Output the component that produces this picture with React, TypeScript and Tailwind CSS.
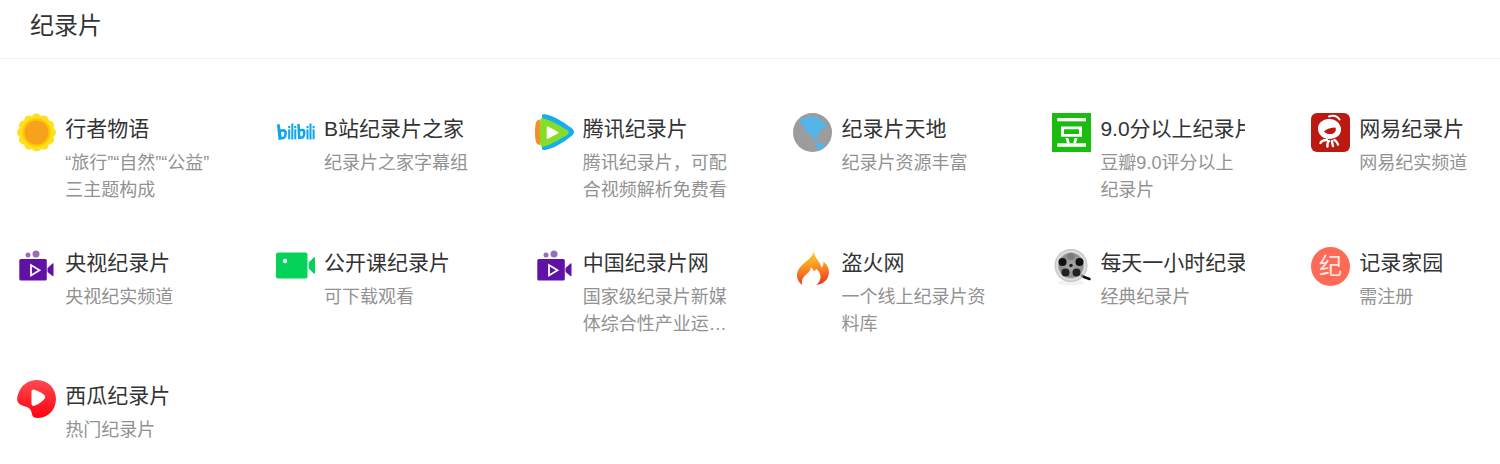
const Sunflower = () => (
  <svg viewBox="0 0 39 39" className="size-full">
    {Array.from({ length: 12 }).map((_, i) => {
      const a = (i * Math.PI) / 6
      return <circle key={i} cx={19.5 + 14.5 * Math.cos(a)} cy={19.5 + 14 * Math.sin(a)} r="5" fill="#ffdf1e" />
    })}
    <circle cx="19.5" cy="19.5" r="14" fill="#ffc800" />
    <circle cx="19.5" cy="19.5" r="12" fill="#f7a11c" />
  </svg>
)

const Bilibili = () => (
  <svg viewBox="0 0 39 39" className="size-full" fill="#0ea5ec">
    <path d="M1 11.500l2.600-.5 1 5.500c2.900-1 5.900-.7 6.200 2.300.3 3.300-.6 6.800-3.300 7.400L2.500 27zM5 19.200l.7 4.800 1.900-.4c.8-1.600.9-3.600.4-4.400-.7-.6-2-.4-3 0z" />
    <rect x="12.200" y="13" width="2" height="2.200" />
    <rect x="12.200" y="16.300" width="2" height="10" />
    <rect x="15.300" y="10.500" width="2" height="16" />
    <rect x="18.300" y="13" width="2" height="2.200" />
    <rect x="18.300" y="16.300" width="2" height="10" />
    <path d="M21.200 11l2.400-.3.500 5.300c2.700-.7 5.300-.5 5.400 2.500.1 3.200-.7 6.800-3.200 7.300l-4.300.5zM24.200 18.500l.3 5 1.700-.2c.8-1.500 1-3.600.6-4.500-.6-.7-1.700-.6-2.600-.3z" />
    <rect x="30.500" y="13" width="2" height="2.200" />
    <rect x="30.500" y="16.300" width="2" height="10" />
    <rect x="33.500" y="10.500" width="2" height="16" />
    <rect x="36.600" y="13" width="2" height="2.200" />
    <rect x="36.600" y="16.300" width="2" height="10" />
  </svg>
)

const TencentVideo = () => (
  <svg viewBox="0 0 39 39" className="size-full">
    <path d="M5 6.500C2 6.800 1 8.500.6 11c-.8 5.500-.8 11 0 16.500.4 2.600 1.500 4 4.400 4.500z" fill="#fb8c23" />
    <path d="M7 4c-.5-2.500.5-3.200 3-2.700 8.500 1.700 17 6.500 26.500 13.800 3.300 2.600 3.300 5.200 0 7.800-9.500 7.500-18 12.500-26.500 14.100-2.500.4-3.500-.3-3-2.700z" fill="#14aef0" />
    <path d="M8 5.300C6.500 5 5.600 5.500 5.300 7.500c-1 8-1 16 0 24 .3 2 1.200 2.500 2.700 2.200 7-1.700 15-6.300 24-11.700 2.600-1.700 2.600-3.300 0-5C23 11.500 15 7 8 5.300z" fill="#86dc28" />
    <path d="M13 13.500c-.8-.3-1.300 0-1.300.9v10.500c0 .9.600 1.200 1.300.9l9.800-5.200c.8-.5.800-1.300 0-1.800z" fill="#fff" />
  </svg>
)

const Globe = () => (
  <svg viewBox="0 0 39 39" className="size-full">
    <circle cx="19.500" cy="19.500" r="19.500" fill="#9c9c9c" />
    <path d="M6 8l3.500-3.500 3.500.8L17 3l3.500 1.200 3-.2 2.500 2 3 1 2.500 2.700 2 3.300-1.500 2.500-3.500 1-1.500 2.500-2 1.500-.5 3.500 1 3-2.500-.5-2.500-1-2.800-4-4-2.300-3-4.500-1.700-3.500z" fill="#56b5e8" />
    <path d="M21 30.500l3.200-1 3.800.5 4.500 2.500-2 2.200-2.800 1.500-2.700.5-1.700-3z" fill="#56b5e8" />
  </svg>
)

const Douban = () => (
  <svg viewBox="0 0 39 39" className="size-full">
    <rect width="39" height="39" fill="#1abc0f" />
    <g fill="#fff">
      <rect x="5.300" y="5" width="28.700" height="3.300" />
      <path fillRule="evenodd" d="M9 13.500h21v10.300H9zM12 16.300v4.700h15v-4.700z" />
      <path d="M13.500 25h2.800l1.500 5.300h-2.800zM22.700 25h2.800l-1.500 5.300h-2.800z" />
      <rect x="5.300" y="30.300" width="28.700" height="3.500" />
    </g>
  </svg>
)

const Netease = () => (
  <svg viewBox="0 0 39 39" className="size-full">
    <rect width="39" height="39" rx="6" fill="#bb1a12" />
    <path d="M17.500 6C11 6.500 7 10.500 7 15.500c0 6 5 10.500 11 10.500 6.500 0 12-3.500 12-9.500 0-3-1.500-5.500-3.500-7.500-2.500-2-5.500-3.300-9-3z" fill="#fff" />
    <path d="M13 18.500c2.500-2.500 7-4 11.500-4 .8 2 .3 4.500-1.800 5.700-2.700 1.500-7.200 1.300-9.700-1.700z" fill="#bb1a12" />
    <g fill="none" stroke="#fff" strokeLinecap="round">
      <path d="M18 3.500c4-1.500 8-.5 10.500 3" strokeWidth="2" />
      <path d="M16 27c-3 0-5.500.7-6.500 3M18 28c-1.500 1.500-2 3-1.500 5.500M21 28c0 1.500.5 3 1 5M23.500 27c1.500 1 3 2 3.500 4.500" strokeWidth="2.400" />
    </g>
  </svg>
)

const PurpleCamera = () => (
  <svg viewBox="0 0 39 39" className="size-full">
    <circle cx="11" cy="8" r="2.500" fill="#9a6cb8" />
    <circle cx="19" cy="7" r="3.500" fill="#9a6cb8" />
    <rect x="2.300" y="12" width="27.500" height="21.500" rx="1.500" fill="#5f12a5" />
    <path d="M30.500 21l5-4.500c.6-.4 1-.1 1 .5v11.500c0 .6-.4.900-1 .5l-5-4z" fill="#5f12a5" />
    <path d="M14 18v10.500l8.500-5.200z" fill="none" stroke="#fff" strokeWidth="1.800" />
  </svg>
)

const GreenCamera = () => (
  <svg viewBox="0 0 39 39" className="size-full">
    <rect y="5.500" width="31.500" height="26" rx="2" fill="#04d35a" />
    <path d="M32.700 15.500l5-5c.6-.5 1.300-.2 1.300.5v15c0 .7-.7 1-1.300.5l-5-5z" fill="#04d35a" />
    <circle cx="9" cy="14" r="2.200" fill="#fff" />
  </svg>
)

const Fire = () => (
  <svg viewBox="0 0 39 39" className="size-full">
    <defs>
      <linearGradient id="fire" x1="0.500" y1="0" x2="0.600" y2="1">
        <stop offset="0" stopColor="#ffe02a" />
        <stop offset="0.500" stopColor="#fb9424" />
        <stop offset="1" stopColor="#ea3618" />
      </linearGradient>
    </defs>
    <path
      d="M20 0c2 5-.5 8.500-4 12-4.500 4-10 7.500-11.700 13.500-1.300 5 .8 9.500 5 12.500-1-3.500 0-6.500 2.200-9 2.500-2.500 6-4.300 6.200-8.500 2 1 3 2.200 3.200 3.700 1.200-.5 2-1.200 2.300-2.500 2.500 2 4.300 4.800 4.300 8 0 3.300-1.500 6-4 8C29.500 37.500 36 33 36 25c0-4.300-2.300-8-5.800-10.500.7 2.500 0 4.800-2 6C27.800 17 25.500 14 23.500 11.500 21.500 8.500 20.500 4.500 20 0z"
      fill="url(#fire)"
    />
  </svg>
)

const FilmReel = () => (
  <svg viewBox="0 0 39 39" className="size-full">
    <defs>
      <radialGradient id="reel" cx="0.500" cy="0.500" r="0.500">
        <stop offset="0" stopColor="#a8a8a8" />
        <stop offset="0.700" stopColor="#8c8c8c" />
        <stop offset="0.840" stopColor="#e4e4e4" />
        <stop offset="1" stopColor="#bdbdbd" />
      </radialGradient>
    </defs>
    <ellipse cx="19" cy="35.500" rx="13" ry="3" fill="#f2f2f2" />
    <circle cx="19" cy="18.500" r="16.500" fill="url(#reel)" />
    <path d="M29 28l3 2" stroke="#777" strokeWidth="2.500" />
    <path d="M32 30l5.500 2" stroke="#111" strokeWidth="2.500" strokeLinecap="round" />
    <circle cx="19" cy="9.500" r="3.800" fill="#7d7d7d" />
    <circle cx="10.500" cy="15" r="4" fill="#111" />
    <circle cx="27.500" cy="15" r="4" fill="#111" />
    <circle cx="13.500" cy="25.500" r="4" fill="#222" />
    <circle cx="24.500" cy="25.500" r="4" fill="#222" />
    <circle cx="19" cy="18.500" r="1.800" fill="#222" />
  </svg>
)

const JiluBadge = () => (
  <div className="flex size-full items-center justify-center rounded-full bg-[#ff6a57] text-[23px] text-[#ffe9e5]">纪</div>
)

const Xigua = () => (
  <svg viewBox="0 0 39 39" className="size-full">
    <defs>
      <linearGradient id="xigua" x1="0.500" y1="0" x2="0.500" y2="1">
        <stop offset="0" stopColor="#ff4b4f" />
        <stop offset="1" stopColor="#ff0011" />
      </linearGradient>
    </defs>
    <path
      d="M20 0c11 0 19 8.500 19 19 0 10.500-8 19-18 19-3.500 0-5.500-1-6-3.500-.5-3-1.200-5.500-4-7C8 26 4 26 1.500 23 -.5 20.500 0 17 1.500 13 4.500 5 11.500 0 20 0z"
      fill="url(#xigua)"
    />
    <path d="M14.500 11.500c0-1.600 1.300-2.300 3-1.800 4.500 1.500 7.500 3.300 9.500 5 1.700 1.500 1.500 3.200 0 4.700-2.500 2.500-5.500 4.700-9 6.200-2 .8-3.500 0-3.500-2z" fill="#fff" />
  </svg>
)

const items = [
  { icon: <Sunflower />, title: '行者物语', desc: '“旅行”“自然”“公益”\n三主题构成' },
  { icon: <Bilibili />, title: 'B站纪录片之家', desc: '纪录片之家字幕组' },
  { icon: <TencentVideo />, title: '腾讯纪录片', desc: '腾讯纪录片，可配合视频解析免费看' },
  { icon: <Globe />, title: '纪录片天地', desc: '纪录片资源丰富' },
  { icon: <Douban />, title: '9.0分以上纪录片', desc: '豆瓣9.0评分以上纪录片' },
  { icon: <Netease />, title: '网易纪录片', desc: '网易纪实频道' },
  { icon: <PurpleCamera />, title: '央视纪录片', desc: '央视纪实频道' },
  { icon: <GreenCamera />, title: '公开课纪录片', desc: '可下载观看' },
  { icon: <PurpleCamera />, title: '中国纪录片网', desc: '国家级纪录片新媒体综合性产业运营平台，汇聚海量优质内容' },
  { icon: <Fire />, title: '盗火网', desc: '一个线上纪录片资料库' },
  { icon: <FilmReel />, title: '每天一小时纪录片', desc: '经典纪录片' },
  { icon: <JiluBadge />, title: '记录家园', desc: '需注册' },
  { icon: <Xigua />, title: '西瓜纪录片', desc: '热门纪录片' },
]

export default function App() {
  return (
    <div className="h-[464px] overflow-hidden bg-white font-['Liberation_Sans','Noto_Sans_CJK_SC',sans-serif]">
      <div className="h-[59px] border-b border-[#f2f2f2] pl-[30px] text-[24px] leading-[52px] text-[#333]">纪录片</div>
      <div className="grid w-[1560px] grid-cols-[repeat(6,194px)] auto-rows-[90.5px] gap-x-[64.8px] gap-y-[43px] pt-[54px] pl-[17px]">
        {items.map((item) => (
          <div key={item.title} className="flex gap-[9.2px]">
            <div className="size-[39px] shrink-0">{item.icon}</div>
            <div className="w-[145px]">
              <div className="h-[32px] overflow-hidden text-[21px] leading-[32px] whitespace-nowrap text-[#333]">{item.title}</div>
              <div className="mt-[5px] line-clamp-2 text-[18px] leading-[27px] whitespace-pre-line text-[#929292]">{item.desc}</div>
            </div>
          </div>
        ))}
      </div>
    </div>
  )
}
